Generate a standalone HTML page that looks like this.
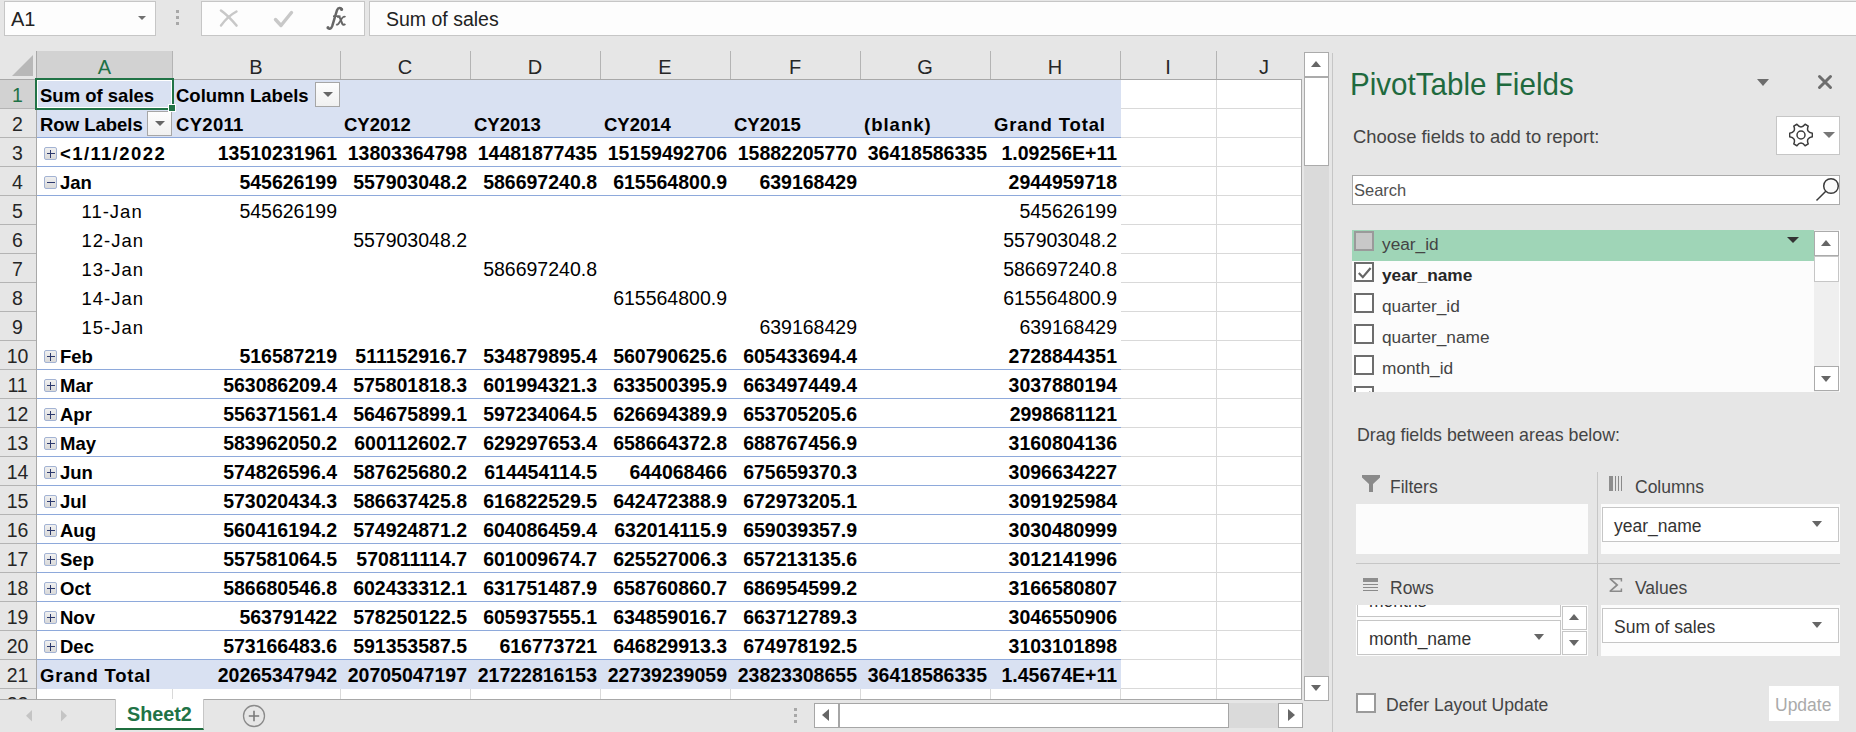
<!DOCTYPE html><html><head><meta charset="utf-8"><title>Excel PivotTable</title><style>
*{margin:0;padding:0;box-sizing:border-box}
html,body{width:1856px;height:732px;overflow:hidden;background:#e6e6e6;font-family:"Liberation Sans",sans-serif;color:#000}
body{position:relative}
.a{position:absolute}
.t{position:absolute;white-space:nowrap;line-height:28px;height:28px}
.num{padding-top:1px}
.lbl{padding-top:2px}
.num{font-size:19.5px;text-align:right}
.lbl{font-size:18.5px}
.b{font-weight:bold}
.hl{position:absolute;height:1px}
.vl{position:absolute;width:1px}
.ch{position:absolute;top:53px;height:28px;line-height:28px;text-align:center;font-size:20px;color:#262626}
.rh{position:absolute;left:0;width:35px;height:28px;line-height:28px;text-align:center;font-size:19.5px;color:#262626;padding-top:1px}
.dd{position:absolute;width:25px;height:25px;border:1px solid #a6a6a6;background:linear-gradient(#fdfdfd,#f0f0f0)}
.dd:after{content:"";position:absolute;left:7px;top:9px;border-left:5px solid transparent;border-right:5px solid transparent;border-top:5px solid #666}
.pm{position:absolute;width:13px;height:13px;border:1px solid #a3b3d3;border-radius:2px;background:linear-gradient(#f0f0f0,#d9d9d9)}
.pm i{position:absolute;left:1.5px;top:5px;width:8px;height:1.3px;background:#2d3a6e}
.pm b{position:absolute;left:5px;top:1.5px;width:1.3px;height:8px;background:#2d3a6e}
.pt{position:absolute;white-space:nowrap;color:#444;font-size:17.5px;margin-top:2px}
.cb{position:absolute;width:20px;height:20px;border:2px solid #666;background:#fff}
.tri{position:absolute;width:0;height:0;border-left:5.5px solid transparent;border-right:5.5px solid transparent;border-top:6px solid #666}
.triu{position:absolute;width:0;height:0;border-left:5.5px solid transparent;border-right:5.5px solid transparent;border-bottom:6px solid #666}
</style></head><body>
<div class="a" style="left:4px;top:1px;width:152px;height:35px;background:#fdfdfd;border:1px solid #c6c6c6"></div>
<div class="t" style="left:11px;top:5px;font-size:20px;color:#222">A1</div>
<div class="tri" style="left:138px;top:16px;border-left-width:4.5px;border-right-width:4.5px;border-top-width:4.5px;border-top-color:#707070"></div>
<div class="a" style="left:176px;top:10px;width:3px;height:3px;background:#a8a8a8"></div>
<div class="a" style="left:176px;top:16px;width:3px;height:3px;background:#a8a8a8"></div>
<div class="a" style="left:176px;top:22px;width:3px;height:3px;background:#a8a8a8"></div>
<div class="a" style="left:201px;top:1px;width:164px;height:35px;background:#fdfdfd;border:1px solid #c6c6c6"></div>
<svg class="a" style="left:218px;top:8px" width="22" height="20" viewBox="0 0 22 20"><path d="M3 2.5C8 6 13 11 18.5 17.5" stroke="#c8c8c8" stroke-width="2.6" stroke-linecap="round" fill="none"/><path d="M18.5 3.5C12 7 7 12 3 17.5" stroke="#c8c8c8" stroke-width="2.4" stroke-linecap="round" fill="none"/></svg>
<svg class="a" style="left:272px;top:9px" width="23" height="20" viewBox="0 0 23 20"><path d="M3.5 10.5L9 16.5L19.5 3.5" stroke="#c8c8c8" stroke-width="3.4" stroke-linecap="round" stroke-linejoin="round" fill="none"/></svg>
<svg class="a" style="left:320px;top:0px" width="30" height="34" viewBox="320 0 30 34"><path d="M342 9.6C341 7.6 338.2 7.4 337 10.2L332.2 26.2C331.2 29.2 328.6 29.4 327.6 27.6" stroke="#666" stroke-width="2.5" fill="none"/><circle cx="341.6" cy="9.4" r="1.5" fill="#666"/><circle cx="328" cy="27.4" r="1.5" fill="#666"/><path d="M333 16.2H340.5" stroke="#666" stroke-width="1.6"/><path d="M337 17C338.6 16.2 339.6 16.8 340.4 19L342 23.2C342.6 24.8 343.6 25.2 345.4 24" stroke="#666" stroke-width="2.1" fill="none"/><path d="M345.4 17.2C344.4 16.2 343.2 16.6 341.8 18.6L339.2 22.8C338.2 24.6 337.2 25 336.2 24.2" stroke="#666" stroke-width="1.8" fill="none"/></svg>
<div class="a" style="left:369px;top:1px;width:1490px;height:35px;background:#fdfdfd;border:1px solid #c6c6c6"></div>
<div class="t" style="left:386px;top:5px;font-size:19.5px;color:#222">Sum of sales</div>
<div class="a" style="left:37px;top:51px;width:135px;height:28px;background:#d2d2d2"></div>
<svg class="a" style="left:12px;top:55px" width="22" height="22" viewBox="0 0 22 22"><path d="M21 0V21H0Z" fill="#b8b8b8"/></svg>
<div class="ch" style="left:37px;width:135px;color:#1e7145">A</div>
<div class="vl" style="left:172px;top:51px;height:28px;background:#b4b4b4"></div>
<div class="ch" style="left:172px;width:168px;color:#262626">B</div>
<div class="vl" style="left:340px;top:51px;height:28px;background:#b4b4b4"></div>
<div class="ch" style="left:340px;width:130px;color:#262626">C</div>
<div class="vl" style="left:470px;top:51px;height:28px;background:#b4b4b4"></div>
<div class="ch" style="left:470px;width:130px;color:#262626">D</div>
<div class="vl" style="left:600px;top:51px;height:28px;background:#b4b4b4"></div>
<div class="ch" style="left:600px;width:130px;color:#262626">E</div>
<div class="vl" style="left:730px;top:51px;height:28px;background:#b4b4b4"></div>
<div class="ch" style="left:730px;width:130px;color:#262626">F</div>
<div class="vl" style="left:860px;top:51px;height:28px;background:#b4b4b4"></div>
<div class="ch" style="left:860px;width:130px;color:#262626">G</div>
<div class="vl" style="left:990px;top:51px;height:28px;background:#b4b4b4"></div>
<div class="ch" style="left:990px;width:130px;color:#262626">H</div>
<div class="vl" style="left:1120px;top:51px;height:28px;background:#b4b4b4"></div>
<div class="ch" style="left:1120px;width:96px;color:#262626">I</div>
<div class="vl" style="left:1216px;top:51px;height:28px;background:#b4b4b4"></div>
<div class="ch" style="left:1216px;width:96px;color:#262626">J</div>
<div class="hl" style="left:0;top:79px;width:1302px;background:#a8a8a8"></div>
<div class="a" style="left:0;top:80px;width:36px;height:28px;background:#d2d2d2"></div>
<div class="vl" style="left:36px;top:51px;height:648px;background:#a8a8a8"></div>
<div class="rh" style="top:80px;color:#1e7145">1</div>
<div class="hl" style="left:0;top:108px;width:36px;background:#b4b4b4"></div>
<div class="rh" style="top:109px;color:#262626">2</div>
<div class="hl" style="left:0;top:137px;width:36px;background:#b4b4b4"></div>
<div class="rh" style="top:138px;color:#262626">3</div>
<div class="hl" style="left:0;top:166px;width:36px;background:#b4b4b4"></div>
<div class="rh" style="top:167px;color:#262626">4</div>
<div class="hl" style="left:0;top:195px;width:36px;background:#b4b4b4"></div>
<div class="rh" style="top:196px;color:#262626">5</div>
<div class="hl" style="left:0;top:224px;width:36px;background:#b4b4b4"></div>
<div class="rh" style="top:225px;color:#262626">6</div>
<div class="hl" style="left:0;top:253px;width:36px;background:#b4b4b4"></div>
<div class="rh" style="top:254px;color:#262626">7</div>
<div class="hl" style="left:0;top:282px;width:36px;background:#b4b4b4"></div>
<div class="rh" style="top:283px;color:#262626">8</div>
<div class="hl" style="left:0;top:311px;width:36px;background:#b4b4b4"></div>
<div class="rh" style="top:312px;color:#262626">9</div>
<div class="hl" style="left:0;top:340px;width:36px;background:#b4b4b4"></div>
<div class="rh" style="top:341px;color:#262626">10</div>
<div class="hl" style="left:0;top:369px;width:36px;background:#b4b4b4"></div>
<div class="rh" style="top:370px;color:#262626">11</div>
<div class="hl" style="left:0;top:398px;width:36px;background:#b4b4b4"></div>
<div class="rh" style="top:399px;color:#262626">12</div>
<div class="hl" style="left:0;top:427px;width:36px;background:#b4b4b4"></div>
<div class="rh" style="top:428px;color:#262626">13</div>
<div class="hl" style="left:0;top:456px;width:36px;background:#b4b4b4"></div>
<div class="rh" style="top:457px;color:#262626">14</div>
<div class="hl" style="left:0;top:485px;width:36px;background:#b4b4b4"></div>
<div class="rh" style="top:486px;color:#262626">15</div>
<div class="hl" style="left:0;top:514px;width:36px;background:#b4b4b4"></div>
<div class="rh" style="top:515px;color:#262626">16</div>
<div class="hl" style="left:0;top:543px;width:36px;background:#b4b4b4"></div>
<div class="rh" style="top:544px;color:#262626">17</div>
<div class="hl" style="left:0;top:572px;width:36px;background:#b4b4b4"></div>
<div class="rh" style="top:573px;color:#262626">18</div>
<div class="hl" style="left:0;top:601px;width:36px;background:#b4b4b4"></div>
<div class="rh" style="top:602px;color:#262626">19</div>
<div class="hl" style="left:0;top:630px;width:36px;background:#b4b4b4"></div>
<div class="rh" style="top:631px;color:#262626">20</div>
<div class="hl" style="left:0;top:659px;width:36px;background:#b4b4b4"></div>
<div class="rh" style="top:660px;color:#262626">21</div>
<div class="hl" style="left:0;top:688px;width:36px;background:#b4b4b4"></div>
<div class="rh" style="top:689px;color:#262626;height:10px;overflow:hidden;line-height:28px">22</div>
<div class="a" style="left:37px;top:80px;width:1264px;height:619px;background:#fff"></div>
<div class="vl" style="left:172px;top:689px;height:10px;background:#d9d9d9"></div>
<div class="vl" style="left:340px;top:689px;height:10px;background:#d9d9d9"></div>
<div class="vl" style="left:470px;top:689px;height:10px;background:#d9d9d9"></div>
<div class="vl" style="left:600px;top:689px;height:10px;background:#d9d9d9"></div>
<div class="vl" style="left:730px;top:689px;height:10px;background:#d9d9d9"></div>
<div class="vl" style="left:860px;top:689px;height:10px;background:#d9d9d9"></div>
<div class="vl" style="left:990px;top:689px;height:10px;background:#d9d9d9"></div>
<div class="vl" style="left:1120px;top:689px;height:10px;background:#d9d9d9"></div>
<div class="vl" style="left:1216px;top:80px;height:619px;background:#d9d9d9"></div>
<div class="hl" style="left:1121px;top:108px;width:180px;background:#d9d9d9"></div>
<div class="hl" style="left:1121px;top:137px;width:180px;background:#d9d9d9"></div>
<div class="hl" style="left:1121px;top:166px;width:180px;background:#d9d9d9"></div>
<div class="hl" style="left:1121px;top:195px;width:180px;background:#d9d9d9"></div>
<div class="hl" style="left:1121px;top:224px;width:180px;background:#d9d9d9"></div>
<div class="hl" style="left:1121px;top:253px;width:180px;background:#d9d9d9"></div>
<div class="hl" style="left:1121px;top:282px;width:180px;background:#d9d9d9"></div>
<div class="hl" style="left:1121px;top:311px;width:180px;background:#d9d9d9"></div>
<div class="hl" style="left:1121px;top:340px;width:180px;background:#d9d9d9"></div>
<div class="hl" style="left:1121px;top:369px;width:180px;background:#d9d9d9"></div>
<div class="hl" style="left:1121px;top:398px;width:180px;background:#d9d9d9"></div>
<div class="hl" style="left:1121px;top:427px;width:180px;background:#d9d9d9"></div>
<div class="hl" style="left:1121px;top:456px;width:180px;background:#d9d9d9"></div>
<div class="hl" style="left:1121px;top:485px;width:180px;background:#d9d9d9"></div>
<div class="hl" style="left:1121px;top:514px;width:180px;background:#d9d9d9"></div>
<div class="hl" style="left:1121px;top:543px;width:180px;background:#d9d9d9"></div>
<div class="hl" style="left:1121px;top:572px;width:180px;background:#d9d9d9"></div>
<div class="hl" style="left:1121px;top:601px;width:180px;background:#d9d9d9"></div>
<div class="hl" style="left:1121px;top:630px;width:180px;background:#d9d9d9"></div>
<div class="hl" style="left:1121px;top:659px;width:180px;background:#d9d9d9"></div>
<div class="hl" style="left:1121px;top:688px;width:180px;background:#d9d9d9"></div>
<div class="vl" style="left:1120px;top:689px;height:10px;background:#d9d9d9"></div>
<div class="vl" style="left:1301px;top:79px;height:621px;background:#a8a8a8"></div>
<div class="hl" style="left:0;top:699px;width:1302px;background:#a8a8a8"></div>
<div class="a" style="left:37px;top:80px;width:1084px;height:57px;background:#d9e1f2"></div>
<div class="a" style="left:37px;top:660px;width:1084px;height:29px;background:#d9e1f2"></div>
<div class="hl" style="left:37px;top:137px;width:1084px;background:#8ea9db"></div>
<div class="hl" style="left:37px;top:166px;width:1084px;background:#8ea9db"></div>
<div class="hl" style="left:37px;top:195px;width:1084px;background:#8ea9db"></div>
<div class="hl" style="left:37px;top:369px;width:1084px;background:#8ea9db"></div>
<div class="hl" style="left:37px;top:398px;width:1084px;background:#8ea9db"></div>
<div class="hl" style="left:37px;top:427px;width:1084px;background:#8ea9db"></div>
<div class="hl" style="left:37px;top:456px;width:1084px;background:#8ea9db"></div>
<div class="hl" style="left:37px;top:485px;width:1084px;background:#8ea9db"></div>
<div class="hl" style="left:37px;top:514px;width:1084px;background:#8ea9db"></div>
<div class="hl" style="left:37px;top:543px;width:1084px;background:#8ea9db"></div>
<div class="hl" style="left:37px;top:572px;width:1084px;background:#8ea9db"></div>
<div class="hl" style="left:37px;top:601px;width:1084px;background:#8ea9db"></div>
<div class="hl" style="left:37px;top:630px;width:1084px;background:#8ea9db"></div>
<div class="hl" style="left:37px;top:659px;width:1084px;background:#8ea9db"></div>
<div class="t lbl b" style="left:40px;top:80px">Sum of sales</div>
<div class="t lbl b" style="left:176px;top:80px">Column Labels</div>
<div class="dd" style="left:315px;top:82px"></div>
<div class="t lbl b" style="left:40px;top:109px">Row Labels</div>
<div class="dd" style="left:147px;top:111px"></div>
<div class="t lbl b" style="left:176px;top:109px;letter-spacing:0.3px;">CY2011</div>
<div class="t lbl b" style="left:344px;top:109px;">CY2012</div>
<div class="t lbl b" style="left:474px;top:109px;">CY2013</div>
<div class="t lbl b" style="left:604px;top:109px;">CY2014</div>
<div class="t lbl b" style="left:734px;top:109px;">CY2015</div>
<div class="t lbl b" style="left:864px;top:109px;letter-spacing:1px;">(blank)</div>
<div class="t lbl b" style="left:994px;top:109px;letter-spacing:0.85px;">Grand Total</div>
<div class="pm" style="left:44px;top:147px"><i></i><b></b></div>
<div class="t lbl b" style="left:60px;top:138px;letter-spacing:1.4px;">&lt;1/11/2022</div>
<div class="t num b" style="left:172px;width:165px;top:138px">13510231961</div>
<div class="t num b" style="left:340px;width:127px;top:138px">13803364798</div>
<div class="t num b" style="left:470px;width:127px;top:138px">14481877435</div>
<div class="t num b" style="left:600px;width:127px;top:138px">15159492706</div>
<div class="t num b" style="left:730px;width:127px;top:138px">15882205770</div>
<div class="t num b" style="left:860px;width:127px;top:138px">36418586335</div>
<div class="t num b" style="left:990px;width:127px;top:138px">1.09256E+11</div>
<div class="pm" style="left:44px;top:176px"><i></i></div>
<div class="t lbl b" style="left:60px;top:167px;">Jan</div>
<div class="t num b" style="left:172px;width:165px;top:167px">545626199</div>
<div class="t num b" style="left:340px;width:127px;top:167px">557903048.2</div>
<div class="t num b" style="left:470px;width:127px;top:167px">586697240.8</div>
<div class="t num b" style="left:600px;width:127px;top:167px">615564800.9</div>
<div class="t num b" style="left:730px;width:127px;top:167px">639168429</div>
<div class="t num b" style="left:990px;width:127px;top:167px">2944959718</div>
<div class="t lbl" style="left:81.5px;top:196px;letter-spacing:1px">11-Jan</div>
<div class="t num" style="left:172px;width:165px;top:196px">545626199</div>
<div class="t num" style="left:990px;width:127px;top:196px">545626199</div>
<div class="t lbl" style="left:81.5px;top:225px;letter-spacing:1px">12-Jan</div>
<div class="t num" style="left:340px;width:127px;top:225px">557903048.2</div>
<div class="t num" style="left:990px;width:127px;top:225px">557903048.2</div>
<div class="t lbl" style="left:81.5px;top:254px;letter-spacing:1px">13-Jan</div>
<div class="t num" style="left:470px;width:127px;top:254px">586697240.8</div>
<div class="t num" style="left:990px;width:127px;top:254px">586697240.8</div>
<div class="t lbl" style="left:81.5px;top:283px;letter-spacing:1px">14-Jan</div>
<div class="t num" style="left:600px;width:127px;top:283px">615564800.9</div>
<div class="t num" style="left:990px;width:127px;top:283px">615564800.9</div>
<div class="t lbl" style="left:81.5px;top:312px;letter-spacing:1px">15-Jan</div>
<div class="t num" style="left:730px;width:127px;top:312px">639168429</div>
<div class="t num" style="left:990px;width:127px;top:312px">639168429</div>
<div class="pm" style="left:44px;top:350px"><i></i><b></b></div>
<div class="t lbl b" style="left:60px;top:341px;">Feb</div>
<div class="t num b" style="left:172px;width:165px;top:341px">516587219</div>
<div class="t num b" style="left:340px;width:127px;top:341px">511152916.7</div>
<div class="t num b" style="left:470px;width:127px;top:341px">534879895.4</div>
<div class="t num b" style="left:600px;width:127px;top:341px">560790625.6</div>
<div class="t num b" style="left:730px;width:127px;top:341px">605433694.4</div>
<div class="t num b" style="left:990px;width:127px;top:341px">2728844351</div>
<div class="pm" style="left:44px;top:379px"><i></i><b></b></div>
<div class="t lbl b" style="left:60px;top:370px;">Mar</div>
<div class="t num b" style="left:172px;width:165px;top:370px">563086209.4</div>
<div class="t num b" style="left:340px;width:127px;top:370px">575801818.3</div>
<div class="t num b" style="left:470px;width:127px;top:370px">601994321.3</div>
<div class="t num b" style="left:600px;width:127px;top:370px">633500395.9</div>
<div class="t num b" style="left:730px;width:127px;top:370px">663497449.4</div>
<div class="t num b" style="left:990px;width:127px;top:370px">3037880194</div>
<div class="pm" style="left:44px;top:408px"><i></i><b></b></div>
<div class="t lbl b" style="left:60px;top:399px;">Apr</div>
<div class="t num b" style="left:172px;width:165px;top:399px">556371561.4</div>
<div class="t num b" style="left:340px;width:127px;top:399px">564675899.1</div>
<div class="t num b" style="left:470px;width:127px;top:399px">597234064.5</div>
<div class="t num b" style="left:600px;width:127px;top:399px">626694389.9</div>
<div class="t num b" style="left:730px;width:127px;top:399px">653705205.6</div>
<div class="t num b" style="left:990px;width:127px;top:399px">2998681121</div>
<div class="pm" style="left:44px;top:437px"><i></i><b></b></div>
<div class="t lbl b" style="left:60px;top:428px;">May</div>
<div class="t num b" style="left:172px;width:165px;top:428px">583962050.2</div>
<div class="t num b" style="left:340px;width:127px;top:428px">600112602.7</div>
<div class="t num b" style="left:470px;width:127px;top:428px">629297653.4</div>
<div class="t num b" style="left:600px;width:127px;top:428px">658664372.8</div>
<div class="t num b" style="left:730px;width:127px;top:428px">688767456.9</div>
<div class="t num b" style="left:990px;width:127px;top:428px">3160804136</div>
<div class="pm" style="left:44px;top:466px"><i></i><b></b></div>
<div class="t lbl b" style="left:60px;top:457px;">Jun</div>
<div class="t num b" style="left:172px;width:165px;top:457px">574826596.4</div>
<div class="t num b" style="left:340px;width:127px;top:457px">587625680.2</div>
<div class="t num b" style="left:470px;width:127px;top:457px">614454114.5</div>
<div class="t num b" style="left:600px;width:127px;top:457px">644068466</div>
<div class="t num b" style="left:730px;width:127px;top:457px">675659370.3</div>
<div class="t num b" style="left:990px;width:127px;top:457px">3096634227</div>
<div class="pm" style="left:44px;top:495px"><i></i><b></b></div>
<div class="t lbl b" style="left:60px;top:486px;">Jul</div>
<div class="t num b" style="left:172px;width:165px;top:486px">573020434.3</div>
<div class="t num b" style="left:340px;width:127px;top:486px">586637425.8</div>
<div class="t num b" style="left:470px;width:127px;top:486px">616822529.5</div>
<div class="t num b" style="left:600px;width:127px;top:486px">642472388.9</div>
<div class="t num b" style="left:730px;width:127px;top:486px">672973205.1</div>
<div class="t num b" style="left:990px;width:127px;top:486px">3091925984</div>
<div class="pm" style="left:44px;top:524px"><i></i><b></b></div>
<div class="t lbl b" style="left:60px;top:515px;">Aug</div>
<div class="t num b" style="left:172px;width:165px;top:515px">560416194.2</div>
<div class="t num b" style="left:340px;width:127px;top:515px">574924871.2</div>
<div class="t num b" style="left:470px;width:127px;top:515px">604086459.4</div>
<div class="t num b" style="left:600px;width:127px;top:515px">632014115.9</div>
<div class="t num b" style="left:730px;width:127px;top:515px">659039357.9</div>
<div class="t num b" style="left:990px;width:127px;top:515px">3030480999</div>
<div class="pm" style="left:44px;top:553px"><i></i><b></b></div>
<div class="t lbl b" style="left:60px;top:544px;">Sep</div>
<div class="t num b" style="left:172px;width:165px;top:544px">557581064.5</div>
<div class="t num b" style="left:340px;width:127px;top:544px">570811114.7</div>
<div class="t num b" style="left:470px;width:127px;top:544px">601009674.7</div>
<div class="t num b" style="left:600px;width:127px;top:544px">625527006.3</div>
<div class="t num b" style="left:730px;width:127px;top:544px">657213135.6</div>
<div class="t num b" style="left:990px;width:127px;top:544px">3012141996</div>
<div class="pm" style="left:44px;top:582px"><i></i><b></b></div>
<div class="t lbl b" style="left:60px;top:573px;">Oct</div>
<div class="t num b" style="left:172px;width:165px;top:573px">586680546.8</div>
<div class="t num b" style="left:340px;width:127px;top:573px">602433312.1</div>
<div class="t num b" style="left:470px;width:127px;top:573px">631751487.9</div>
<div class="t num b" style="left:600px;width:127px;top:573px">658760860.7</div>
<div class="t num b" style="left:730px;width:127px;top:573px">686954599.2</div>
<div class="t num b" style="left:990px;width:127px;top:573px">3166580807</div>
<div class="pm" style="left:44px;top:611px"><i></i><b></b></div>
<div class="t lbl b" style="left:60px;top:602px;">Nov</div>
<div class="t num b" style="left:172px;width:165px;top:602px">563791422</div>
<div class="t num b" style="left:340px;width:127px;top:602px">578250122.5</div>
<div class="t num b" style="left:470px;width:127px;top:602px">605937555.1</div>
<div class="t num b" style="left:600px;width:127px;top:602px">634859016.7</div>
<div class="t num b" style="left:730px;width:127px;top:602px">663712789.3</div>
<div class="t num b" style="left:990px;width:127px;top:602px">3046550906</div>
<div class="pm" style="left:44px;top:640px"><i></i><b></b></div>
<div class="t lbl b" style="left:60px;top:631px;">Dec</div>
<div class="t num b" style="left:172px;width:165px;top:631px">573166483.6</div>
<div class="t num b" style="left:340px;width:127px;top:631px">591353587.5</div>
<div class="t num b" style="left:470px;width:127px;top:631px">616773721</div>
<div class="t num b" style="left:600px;width:127px;top:631px">646829913.3</div>
<div class="t num b" style="left:730px;width:127px;top:631px">674978192.5</div>
<div class="t num b" style="left:990px;width:127px;top:631px">3103101898</div>
<div class="t lbl b" style="left:40px;top:660px;letter-spacing:0.8px">Grand Total</div>
<div class="t num b" style="left:172px;width:165px;top:660px">20265347942</div>
<div class="t num b" style="left:340px;width:127px;top:660px">20705047197</div>
<div class="t num b" style="left:470px;width:127px;top:660px">21722816153</div>
<div class="t num b" style="left:600px;width:127px;top:660px">22739239059</div>
<div class="t num b" style="left:730px;width:127px;top:660px">23823308655</div>
<div class="t num b" style="left:860px;width:127px;top:660px">36418586335</div>
<div class="t num b" style="left:990px;width:127px;top:660px">1.45674E+11</div>
<div class="a" style="left:35px;top:78px;width:139px;height:32px;border:2px solid #217346"></div>
<div class="a" style="left:37px;top:80px;width:135px;height:28px;border:1px solid #fff"></div>
<div class="a" style="left:168px;top:104px;width:8px;height:8px;background:#fff"></div>
<div class="a" style="left:169px;top:105px;width:6px;height:6px;background:#217346"></div>
<div class="a" style="left:1304px;top:52px;width:25px;height:649px;background:#dadada"></div>
<div class="a" style="left:1304px;top:52px;width:25px;height:25px;background:#fff;border:1px solid #ababab"></div>
<div class="triu" style="left:1311px;top:61px"></div>
<div class="a" style="left:1304px;top:77px;width:25px;height:89px;background:#fff;border:1px solid #ababab"></div>
<div class="a" style="left:1304px;top:676px;width:25px;height:25px;background:#fff;border:1px solid #ababab"></div>
<div class="tri" style="left:1311px;top:685px"></div>
<svg class="a" style="left:25px;top:710px" width="8" height="12"><path d="M7 0V11.5L1 5.75Z" fill="#c4c4c4"/></svg>
<svg class="a" style="left:61px;top:710px" width="8" height="12"><path d="M0 0V11.5L6 5.75Z" fill="#c4c4c4"/></svg>
<div class="a" style="left:115px;top:699px;width:89px;height:31px;background:#fff;border-left:1px solid #c6c6c6;border-right:1px solid #c6c6c6;border-bottom:2px solid #1e6e3e"></div>
<div class="t b" style="left:127px;top:700px;font-size:19.8px;color:#217346">Sheet2</div>
<svg class="a" style="left:242px;top:704px" width="24" height="24" viewBox="0 0 24 24"><circle cx="12" cy="12" r="10.5" stroke="#8a8a8a" stroke-width="1.3" fill="none"/><path d="M12 6.8V17.2M6.8 12H17.2" stroke="#7a7a7a" stroke-width="1.6"/></svg>
<div class="a" style="left:794px;top:708px;width:3px;height:3px;background:#a8a8a8"></div>
<div class="a" style="left:794px;top:714px;width:3px;height:3px;background:#a8a8a8"></div>
<div class="a" style="left:794px;top:720px;width:3px;height:3px;background:#a8a8a8"></div>
<div class="a" style="left:814px;top:703px;width:489px;height:25px;background:#dadada"></div>
<div class="a" style="left:814px;top:703px;width:25px;height:25px;background:#fff;border:1px solid #a6a6a6"></div>
<svg class="a" style="left:822px;top:709px" width="8" height="13"><path d="M7 0V12L0 6Z" fill="#666"/></svg>
<div class="a" style="left:839px;top:703px;width:390px;height:25px;background:#fff;border:1px solid #a6a6a6"></div>
<div class="a" style="left:1278px;top:703px;width:25px;height:25px;background:#fff;border:1px solid #a6a6a6"></div>
<svg class="a" style="left:1288px;top:709px" width="8" height="13"><path d="M0 0V12L7 6Z" fill="#666"/></svg>
<div class="vl" style="left:1332px;top:53px;height:679px;background:#c6c6c6"></div>
<div class="pt" style="left:1350px;top:64px;font-size:32px;color:#1f6a3e;transform:scaleX(0.925);transform-origin:0 0">PivotTable Fields</div>
<div class="tri" style="left:1757px;top:79px;border-left-width:6.5px;border-right-width:6.5px;border-top-width:7px;border-top-color:#6d6d6d"></div>
<svg class="a" style="left:1816px;top:73px" width="18" height="18" viewBox="0 0 18 18"><path d="M3.5 3.5L14.5 14.5M14.5 3.5L3.5 14.5" stroke="#6d6d6d" stroke-width="3" stroke-linecap="round"/></svg>
<div class="pt" style="left:1353px;top:124px;font-size:18.4px">Choose fields to add to report:</div>
<div class="a" style="left:1776px;top:116px;width:64px;height:39px;background:#fff;border:1px solid #c6c6c6"></div>
<svg class="a" style="left:1789px;top:123px" width="24" height="24" viewBox="0 0 24 24"><path fill="none" stroke="#3c3c3c" stroke-width="1.5" stroke-linejoin="round" d="M23.36 10.20 L23.36 13.80 Q16.68 14.70 19.24 20.94 L16.12 22.74 Q12.00 17.40 7.88 22.74 L4.76 20.94 Q7.32 14.70 0.64 13.80 L0.64 10.20 Q7.32 9.30 4.76 3.06 L7.88 1.26 Q12.00 6.60 16.12 1.26 L19.24 3.06 Q16.68 9.30 23.36 10.20Z"/><circle cx="12" cy="12" r="4" fill="none" stroke="#3c3c3c" stroke-width="1.5"/></svg>
<div class="tri" style="left:1823px;top:132px;border-left-width:6px;border-right-width:6px;border-top-width:6px;border-top-color:#777"></div>
<div class="a" style="left:1352px;top:175px;width:488px;height:30px;background:#fff;border:1px solid #ababab"></div>
<div class="pt" style="left:1354px;top:179px;font-size:16.5px;color:#505050">Search</div>
<svg class="a" style="left:1814px;top:177px" width="26" height="26" viewBox="0 0 26 26"><circle cx="17" cy="9" r="7.3" stroke="#3a3a3a" stroke-width="1.5" fill="#fafafa"/><path d="M11.8 14.2L2.5 23.5" stroke="#3a3a3a" stroke-width="1.5"/></svg>
<div class="a" style="left:1352px;top:230px;width:488px;height:162px;background:#fcfcfc"></div>
<div class="a" style="left:1352px;top:230px;width:462px;height:31px;background:#9fd5b7"></div>
<div class="a" style="left:1814px;top:230px;width:25px;height:162px;background:#efefef"></div>
<div class="a" style="left:1814px;top:231px;width:25px;height:25px;background:#fff;border:1px solid #ababab"></div>
<div class="triu" style="left:1821px;top:240px"></div>
<div class="a" style="left:1814px;top:256px;width:25px;height:26px;background:#fff;border:1px solid #c6c6c6"></div>
<div class="a" style="left:1814px;top:366px;width:25px;height:25px;background:#fff;border:1px solid #ababab"></div>
<div class="tri" style="left:1821px;top:376px"></div>
<div class="tri" style="left:1787px;top:237px;border-left-width:6px;border-right-width:6px;border-top-color:#333"></div>
<div class="a" style="left:1354px;top:231px;width:20px;height:20px;border:2px solid #9a9a9a;background:#c8c8c8"></div>
<div class="pt" style="left:1382px;top:232px;font-size:17.3px;color:#444">year_id</div>
<div class="a" style="left:1354px;top:262px;width:20px;height:20px;border:2px solid #6d6d6d;background:#fff"></div>
<svg class="a" style="left:1356px;top:264px" width="16" height="16" viewBox="0 0 16 16"><path d="M2.8 9L6.8 13.2L14.6 4" stroke="#666" stroke-width="2.2" fill="none"/></svg>
<div class="pt b" style="left:1382px;top:263px;font-size:17.3px;color:#262626">year_name</div>
<div class="a" style="left:1354px;top:293px;width:20px;height:20px;border:2px solid #6d6d6d;background:#fff"></div>
<div class="pt" style="left:1382px;top:294px;font-size:17.3px;color:#444">quarter_id</div>
<div class="a" style="left:1354px;top:324px;width:20px;height:20px;border:2px solid #6d6d6d;background:#fff"></div>
<div class="pt" style="left:1382px;top:325px;font-size:17.3px;color:#444">quarter_name</div>
<div class="a" style="left:1354px;top:355px;width:20px;height:20px;border:2px solid #6d6d6d;background:#fff"></div>
<div class="pt" style="left:1382px;top:356px;font-size:17.3px;color:#444">month_id</div>
<div class="a" style="left:1352px;top:380px;width:462px;height:12px;overflow:hidden"><div class="a" style="left:2px;top:6px;width:20px;height:20px;border:2px solid #6d6d6d;background:#fff"></div><svg class="a" style="left:4px;top:8px" width="16" height="16" viewBox="0 0 16 16"><path d="M2.8 9L6.8 13.2L14.6 4" stroke="#666" stroke-width="2.2" fill="none"/></svg><div class="pt" style="left:30px;top:7px;font-size:17.3px;color:#444">month_name</div></div>
<div class="pt" style="left:1357px;top:423px;font-size:17.8px">Drag fields between areas below:</div>
<div class="vl" style="left:1597px;top:472px;height:184px;background:#c6c6c6"></div>
<div class="hl" style="left:1356px;top:563px;width:484px;background:#c6c6c6"></div>
<svg class="a" style="left:1362px;top:475px" width="19" height="18" viewBox="0 0 19 18"><path d="M0 0H18V2.5L11 9V17H7V9L0 2.5Z" fill="#8a8a8a"/></svg>
<div class="pt" style="left:1390px;top:475px;font-size:17.5px">Filters</div>
<div class="a" style="left:1356px;top:504px;width:232px;height:50px;background:#fcfcfc"></div>
<svg class="a" style="left:1609px;top:476px" width="14" height="15" viewBox="0 0 14 15"><rect x="0" y="0" width="4" height="15" fill="#8e8e8e"/><rect x="6" y="0" width="1" height="15" fill="#8a8a8a"/><rect x="9" y="0" width="1" height="15" fill="#8a8a8a"/><rect x="12" y="0" width="1" height="15" fill="#8a8a8a"/></svg>
<div class="pt" style="left:1635px;top:475px;font-size:17.5px">Columns</div>
<div class="a" style="left:1601px;top:504px;width:239px;height:50px;background:#fcfcfc"></div>
<div class="a" style="left:1602px;top:507px;width:237px;height:35px;background:#fff;border:1px solid #c6c6c6"></div>
<div class="pt" style="left:1614px;top:514px;font-size:17.5px;color:#333">year_name</div>
<div class="tri" style="left:1812px;top:521px"></div>
<svg class="a" style="left:1363px;top:578px" width="15" height="14" viewBox="0 0 15 14"><rect x="0" y="0" width="15" height="4" fill="#8e8e8e"/><rect x="0" y="6" width="15" height="1" fill="#8a8a8a"/><rect x="0" y="9" width="15" height="1" fill="#8a8a8a"/><rect x="0" y="12" width="15" height="1" fill="#8a8a8a"/></svg>
<div class="pt" style="left:1390px;top:576px;font-size:17.5px">Rows</div>
<div class="a" style="left:1356px;top:605px;width:232px;height:51px;background:#fcfcfc;overflow:hidden"></div>
<div class="a" style="left:1357px;top:605px;width:204px;height:12px;background:#fff;border:1px solid #c6c6c6;border-top:none;overflow:hidden"><div class="pt" style="left:11px;top:-16px;font-size:17.5px;color:#333">months</div></div>
<div class="a" style="left:1357px;top:620px;width:204px;height:35px;background:#fff;border:1px solid #c6c6c6"></div>
<div class="pt" style="left:1369px;top:627px;font-size:17.5px;color:#333">month_name</div>
<div class="tri" style="left:1534px;top:634px"></div>
<div class="a" style="left:1562px;top:606px;width:25px;height:24px;background:#fff;border:1px solid #c6c6c6"></div>
<div class="triu" style="left:1569px;top:614px"></div>
<div class="a" style="left:1562px;top:631px;width:25px;height:24px;background:#fff;border:1px solid #c6c6c6"></div>
<div class="tri" style="left:1569px;top:640px"></div>
<svg class="a" style="left:1609px;top:578px" width="14" height="15" viewBox="0 0 14 15"><path d="M0.6 0.8H12.4V3.4" stroke="#8a8a8a" stroke-width="1.5" fill="none"/><path d="M1.2 0.9L8.2 7L1.2 13.2" stroke="#8a8a8a" stroke-width="1.7" fill="none"/><path d="M0.6 13.3H12.4V10.6" stroke="#8a8a8a" stroke-width="1.5" fill="none"/></svg>
<div class="pt" style="left:1635px;top:576px;font-size:17.5px">Values</div>
<div class="a" style="left:1601px;top:605px;width:239px;height:51px;background:#fcfcfc"></div>
<div class="a" style="left:1602px;top:608px;width:237px;height:35px;background:#fff;border:1px solid #c6c6c6"></div>
<div class="pt" style="left:1614px;top:615px;font-size:17.5px;color:#333">Sum of sales</div>
<div class="tri" style="left:1812px;top:622px"></div>
<div class="a" style="left:1356px;top:693px;width:20px;height:20px;border:2px solid #9a9a9a;background:#fff"></div>
<div class="pt" style="left:1386px;top:693px;font-size:17.6px">Defer Layout Update</div>
<div class="a" style="left:1769px;top:686px;width:70px;height:35px;background:#fff"></div>
<div class="pt" style="left:1775px;top:693px;font-size:17.5px;color:#aaaaaa">Update</div>
</body></html>
